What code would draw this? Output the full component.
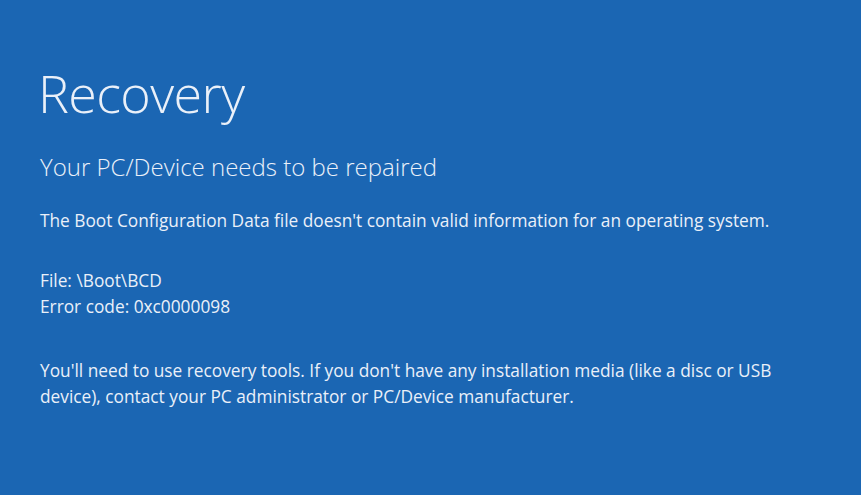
import React from 'react';

const font = { fontFamily: '"Open Sans", "Noto Sans", sans-serif' };

export default function App() {
    return (
        <div
            className="w-[861px] h-[495px] overflow-hidden bg-[#1b66b3] text-[#eaf0f9] pl-[38px]"
            style={font}
        >
            {/* Title */}
            <h1 className="mt-[61px] text-[52px] leading-[64px] font-light tracking-[-0.6px]">Recovery</h1>

            {/* Subtitle */}
            <h2 className="mt-[26px] pl-[2px] text-[24px] leading-[32px] font-light">
                Your PC/Device needs to be repaired
            </h2>

            {/* Body */}
            <div className="mt-[25px] pl-[2px] text-[17.3px] leading-[26px]">
                <p>The Boot Configuration Data file doesn't contain valid information for an operating system.</p>
                <p className="mt-[34px]">File: \Boot\BCD</p>
                <p>Error code: 0xc0000098</p>
                <p className="mt-[38px] w-[750px]">
                    You'll need to use recovery tools. If you don't have any installation media (like a disc or USB
                    device), contact your PC administrator or PC/Device manufacturer.
                </p>
            </div>
        </div>
    );
}
